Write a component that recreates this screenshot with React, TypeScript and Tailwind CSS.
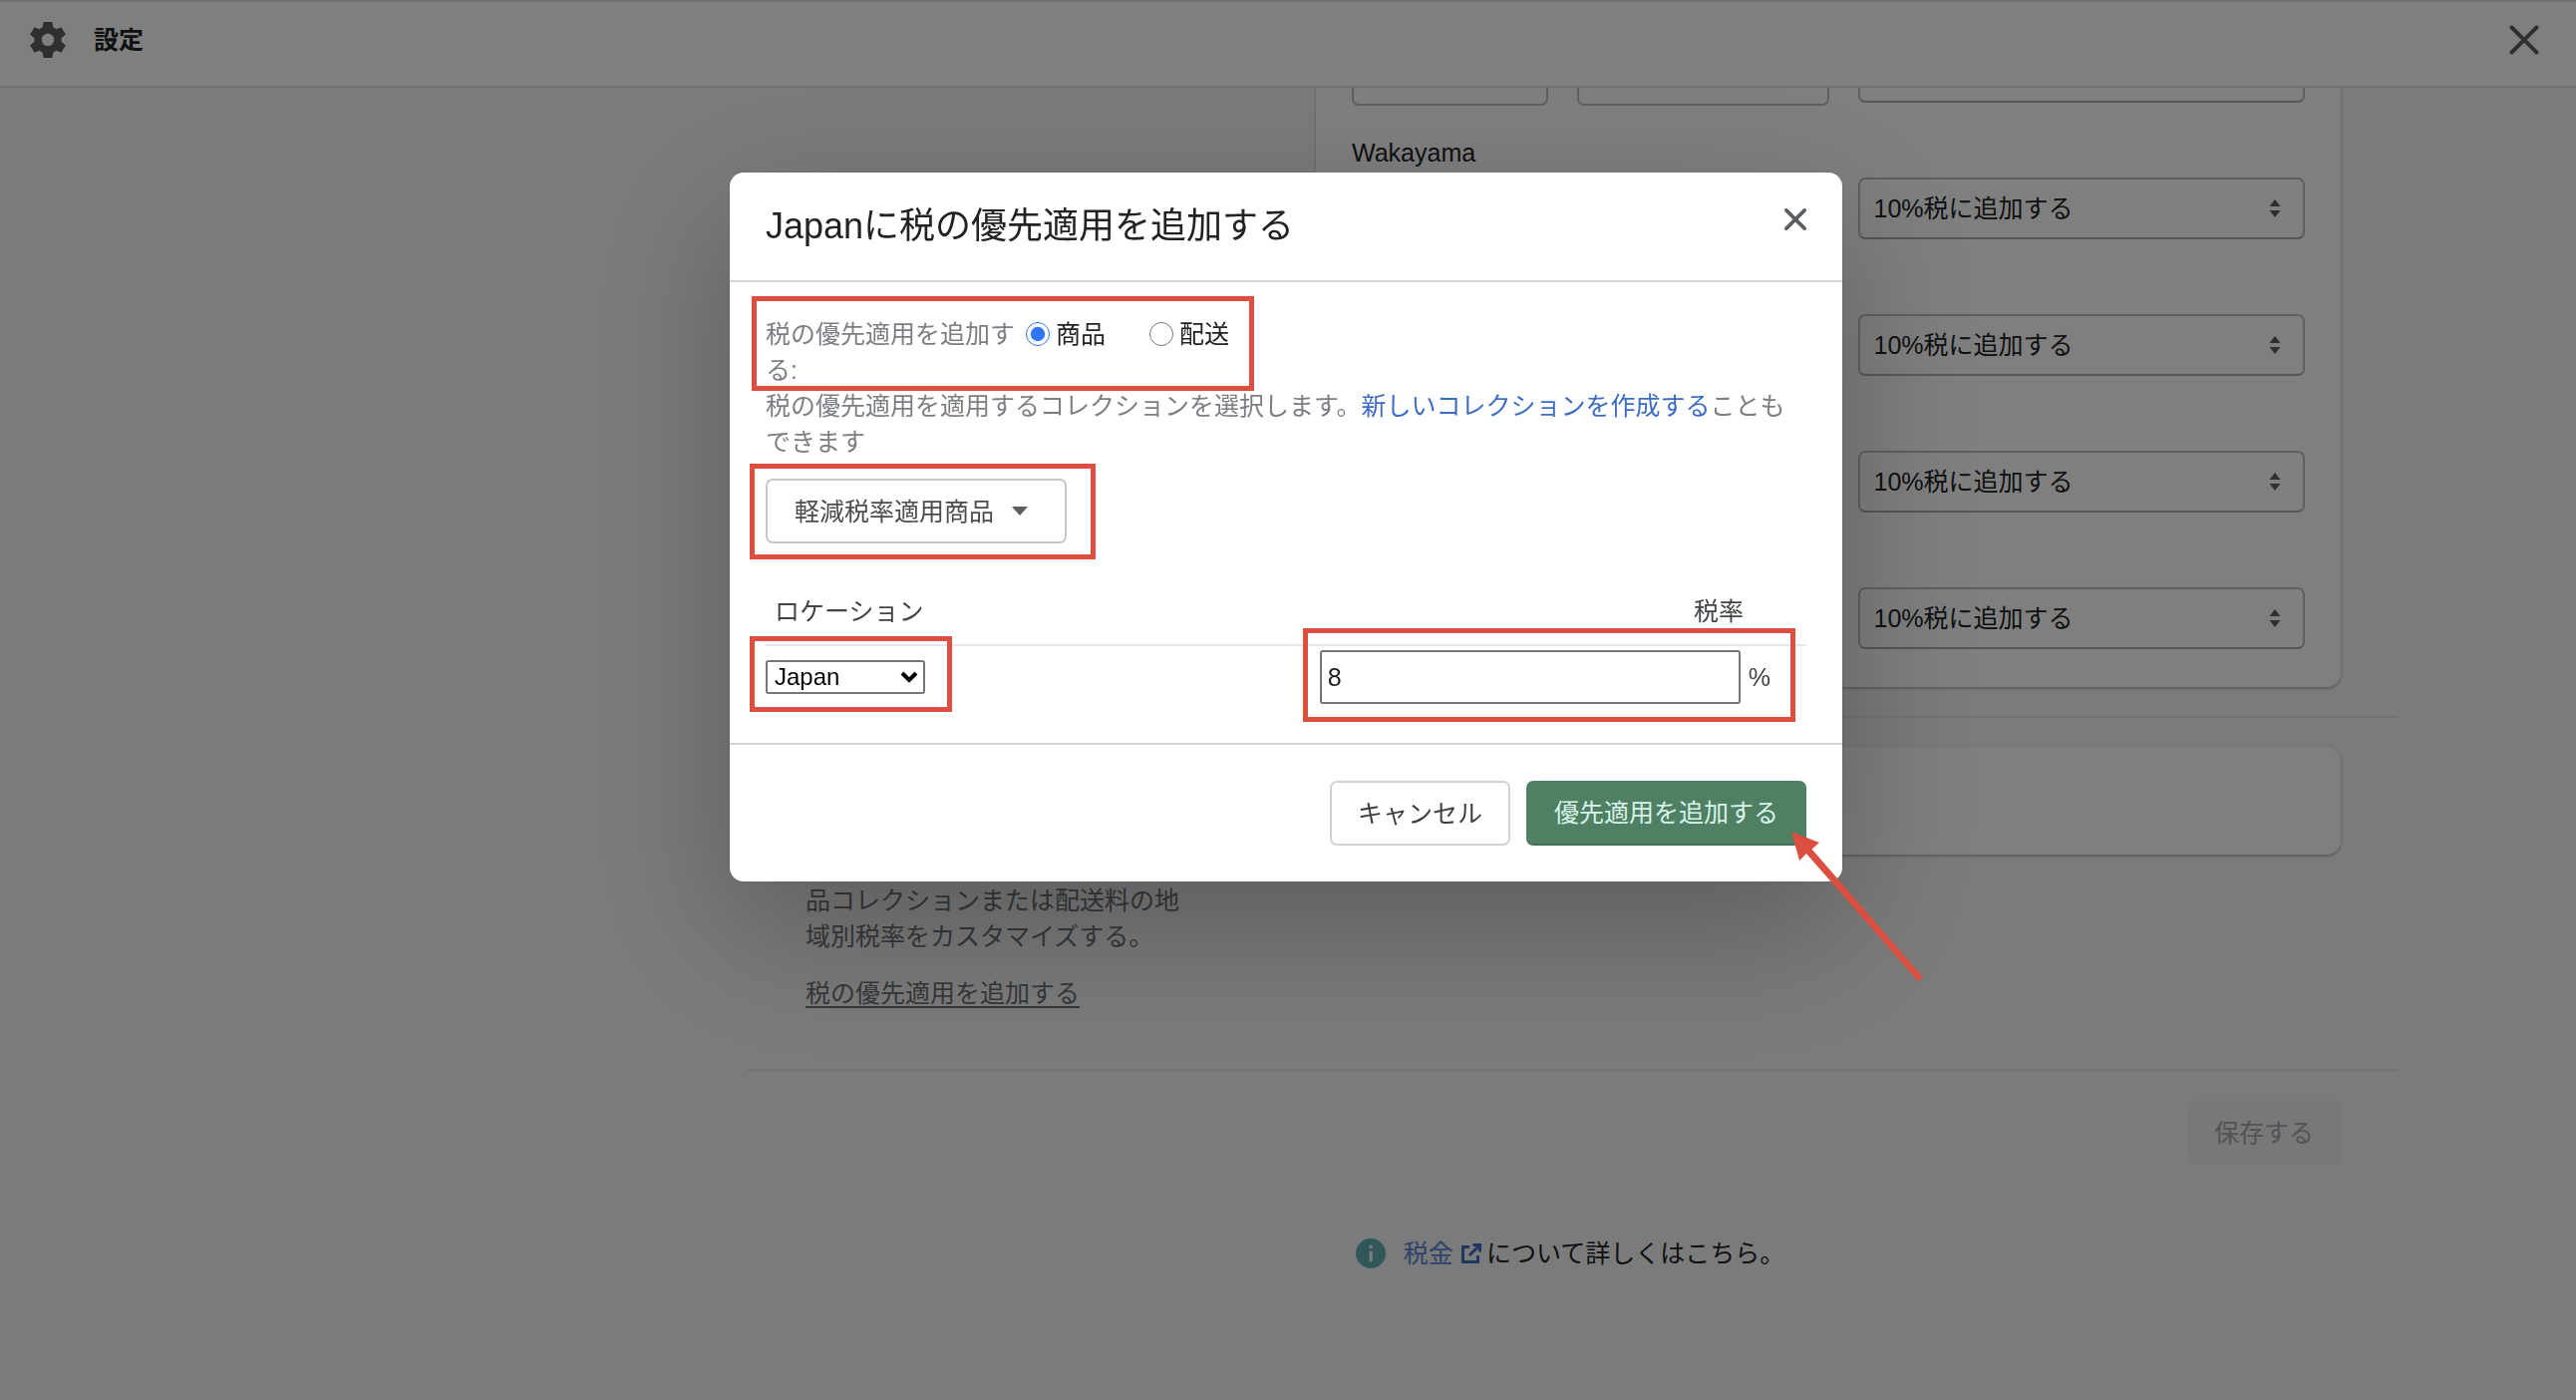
import React, { useState } from 'react';

// Prefecture rows that are scrolled into view behind the modal
const taxRows = [
  { id: 'row-0', name: '' },
  { id: 'row-1', name: 'Wakayama' },
  { id: 'row-2', name: '' },
  { id: 'row-3', name: '' },
  { id: 'row-4', name: '' },
];

const GearIcon = () => (
  <svg viewBox="0 0 36 38" className="h-[38px] w-9" fill="#5c5f62">
    <path
      fillRule="evenodd"
      d="M14.4 1h7.2c.5 0 .9.3 1 .8l.8 4.8c1 .4 2 1 2.9 1.600l4.500-1.700c.5-.2 1 0 1.200.4l3.500 6c.2.400.1 1-.3 1.300L31.400 17.200a13 13 0 0 1 0 3.600l3.800 3c.4.3.5.9.3 1.300l-3.500 6c-.2.400-.7.6-1.200.4l-4.500-1.700c-.9.6-1.900 1.200-2.900 1.600l-.8 4.800c-.1.500-.5.8-1 .8h-7.200c-.5 0-.9-.3-1-.8l-.8-4.800c-1-.4-2-1-2.900-1.600l-4.500 1.700c-.5.2-1 0-1.200-.4l-3.500-6c-.2-.4-.1-1 .3-1.300l3.800-3a13 13 0 0 1 0-3.600l-3.800-3c-.4-.3-.5-.9-.3-1.300l3.500-6c.2-.4.7-.6 1.200-.4l4.500 1.700c.9-.6 1.900-1.200 2.900-1.600l.8-4.800c.1-.5.500-.8 1-.8zM18 25.200a6.200 6.200 0 1 0 0-12.400 6.200 6.200 0 0 0 0 12.400z"
    />
  </svg>
);

const CloseIcon = ({ className, strokeWidth }: { className: string; strokeWidth: number }) => (
  <svg
    viewBox="0 0 30 30"
    className={className}
    fill="none"
    stroke="#5c5f62"
    strokeWidth={strokeWidth}
    strokeLinecap="round"
  >
    <path d="M2.500 2.500l25 25M27.500 2.500l-25 25" />
  </svg>
);

// Red frame drawn around a control to point it out
const Highlight = ({ className }: { className: string }) => (
  <div className={`pointer-events-none absolute border-[5px] border-[#da4f3f] ${className}`} />
);

const TaxSelect = () => (
  <div className="relative mb-[3px] flex-[448]">
    <select
      aria-label="税"
      className="h-[62px] w-full appearance-none rounded-[7px] border-2 border-[#babfc3] border-b-[#a8adb2] bg-white pl-[14px] text-[25px] text-[#202223]"
    >
      <option>10%税に追加する</option>
    </select>
    <svg viewBox="0 0 12 18" className="pointer-events-none absolute top-[22px] right-6 h-[18px] w-3" fill="#5c5f62">
      <path d="M6 0l5.500 7H.5zM6 18l5.500-7H.5z" />
    </svg>
  </div>
);

const App = () => {
  const [target, setTarget] = useState('product');
  const [rate, setRate] = useState('8');

  return (
    <div
      lang="ja"
      className="flex h-screen flex-col overflow-hidden bg-[#f6f6f7] font-['Liberation_Sans','Noto_Sans_CJK_JP',sans-serif] text-[25px] leading-9 text-[#202223]"
    >
      <header className="flex h-[88px] shrink-0 items-center justify-between border-t-2 border-b-2 border-t-[#dcdddf] border-b-[#e1e3e5] bg-white px-[30px] pb-2">
        <div className="flex items-center gap-7">
          <GearIcon />
          <h1 className="text-[25px] font-bold">設定</h1>
        </div>
        <button aria-label="閉じる" className="mr-[7px]">
          <CloseIcon className="h-[30px] w-[30px]" strokeWidth={4} />
        </button>
      </header>

      <main className="flex-1 overflow-hidden pl-[572px]">
        <div className="mx-auto max-w-[1656px]">
          <section className="-mt-[119px] border-b-2 border-[#e6e7e9] px-[58px] pb-[29px]">
            <div className="ml-[512px] rounded-[14px] bg-white px-9 pb-[35px] shadow-[0_0_5px_rgba(23,24,24,0.08),0_2px_3px_rgba(0,0,0,0.2)]">
              {taxRows.map((row) => (
                <div key={row.id} className="flex h-[137px] items-end gap-[29px]">
                  <div className="flex-[478]">
                    {row.name && <p className="mb-[10px]">{row.name}</p>}
                    <div className="flex gap-[29px]">
                      <input aria-label="税率" className="h-[62px] w-0 flex-[196] rounded-[7px] border-2 border-[#babfc3] bg-white" />
                      <input aria-label="税の名前" className="h-[62px] w-0 flex-[253] rounded-[7px] border-2 border-[#babfc3] bg-white" />
                    </div>
                  </div>
                  <TaxSelect />
                </div>
              ))}
            </div>
          </section>

          <section className="flex justify-between border-b-2 border-[#e6e7e9] px-[58px] pt-[29px] pb-[58px]">
            <div className="w-[380px] pt-[136px] text-[#6d7175]">
              <p>品コレクションまたは配送料の地域別税率をカスタマイズする。</p>
              <a href="#override" className="mt-[21px] block underline decoration-2 underline-offset-4">
                税の優先適用を追加する
              </a>
            </div>
            <div className="h-[108px] w-[1028px] rounded-[14px] bg-white shadow-[0_0_5px_rgba(23,24,24,0.08),0_2px_3px_rgba(0,0,0,0.2)]" />
          </section>

          <div className="flex justify-end px-[58px] pt-[29px]">
            <button disabled className="h-[65px] rounded-[7px] bg-[#f0f0f1] px-[27px] text-[#a2a6aa]">
              保存する
            </button>
          </div>

          <p className="mt-[71px] flex items-center justify-center pr-[6px]">
            <svg viewBox="0 0 20 20" className="mr-[18px] h-[30px] w-[30px]">
              <circle cx="10" cy="10" r="10" fill="#62b0b3" />
              <path d="M9 8.500h2.200v7H9zM9 4.500h2.200v2.200H9z" fill="#f6f6f7" />
            </svg>
            <a href="#tax" className="flex items-center text-[#5b87d4]">
              税金
              <svg viewBox="0 0 22 22" className="mr-1 ml-[7px] h-[22px] w-[22px]" fill="none" stroke="#3f6cc0" strokeWidth="3">
                <path d="M9 4.500H2.500v15h15V13M12.500 2.500h7V9.500M19 3L9 13" />
              </svg>
            </a>
            について詳しくはこちら。
          </p>
        </div>
      </main>

      <div className="fixed inset-0 flex items-start justify-center bg-black/50 pt-[173px] pr-1">
        <div
          role="dialog"
          aria-labelledby="modal-title"
          className="relative w-full max-w-[1116px] rounded-[14px] bg-white shadow-[0_47px_144px_rgba(0,0,0,0.25),0_0_2px_rgba(0,0,0,0.2)]"
        >
          <div className="flex h-[110px] items-center justify-between border-b-2 border-[#d5d6d8] px-9">
            <h2 id="modal-title" className="text-[36px]">Japanに税の優先適用を追加する</h2>
            <button aria-label="閉じる" className="mb-[14px]">
              <CloseIcon className="h-[22px] w-[22px]" strokeWidth={5} />
            </button>
          </div>

          <div className="border-b-2 border-[#d2d5d8] px-9 pt-[34px] pb-[39px] text-[#7b7f83]">
            <div className="relative flex w-[470px]">
              <span className="w-[261px]">税の優先適用を追加する:</span>
              <label className="mr-11 flex h-9 items-center gap-[6px] text-[#202223]">
                <input
                  type="radio"
                  name="target"
                  checked={target === 'product'}
                  onChange={() => setTarget('product')}
                  className="h-6 w-6 accent-[#2f76f6]"
                />
                商品
              </label>
              <label className="flex h-9 items-center gap-[6px] text-[#202223]">
                <input
                  type="radio"
                  name="target"
                  checked={target === 'shipping'}
                  onChange={() => setTarget('shipping')}
                  className="h-6 w-6 accent-[#2f76f6]"
                />
                配送
              </label>
              <Highlight className="-top-5 -right-5 -bottom-[3px] -left-[14px]" />
            </div>
            <p>
              税の優先適用を適用するコレクションを選択します。
              <a href="#collection" className="text-[#3d6cc4]">新しいコレクションを作成する</a>
              こともできます
            </p>

            <div className="relative mt-[19px] w-fit">
              <button className="flex h-[65px] items-center gap-[18px] rounded-[7px] border-2 border-[#c4c8cc] px-[27px] pr-[37px] text-[#4a4d50]">
                軽減税率適用商品
                <svg viewBox="0 0 16 9" className="h-[9px] w-4" fill="#5c5f62">
                  <path d="M0 0h16L8 9z" />
                </svg>
              </button>
              <Highlight className="-top-[15px] -right-[29px] -bottom-4 -left-4" />
            </div>

            <table className="mt-[50px] w-full text-[#414548]">
              <thead>
                <tr className="h-[52px] border-b-2 border-[#e6e7e9] align-top">
                  <th className="pl-[9px] text-left font-normal">ロケーション</th>
                  <th className="pr-[63px] text-right font-normal">税率</th>
                </tr>
              </thead>
              <tbody>
                <tr>
                  <td className="pt-1">
                    <div className="relative w-40">
                      <select
                        aria-label="ロケーション"
                        className="block h-[34px] w-full appearance-none rounded-[3px] border-2 border-[#767676] bg-white pl-[7px] text-2xl leading-7 text-black"
                      >
                        <option>Japan</option>
                      </select>
                      <svg
                        viewBox="0 0 18 12"
                        className="pointer-events-none absolute top-[11px] right-[7px] h-3 w-[18px]"
                        fill="none"
                        stroke="#000"
                        strokeWidth="4"
                      >
                        <path d="M2 2l7 7 7-7" />
                      </svg>
                      <Highlight className="-top-6 -right-[27px] -bottom-[18px] -left-4" />
                    </div>
                  </td>
                  <td className="pt-1">
                    <div className="relative mr-9 ml-auto flex w-fit items-center gap-2">
                      <input
                        aria-label="税率"
                        value={rate}
                        onChange={(e) => setRate(e.target.value)}
                        className="h-[54px] w-[422px] rounded-[3px] border-2 border-[#767676] pl-[6px] text-[25px] text-[#202223]"
                      />
                      <span>%</span>
                      <Highlight className="-top-[22px] -right-[25px] -bottom-[18px] -left-[17px]" />
                    </div>
                  </td>
                </tr>
              </tbody>
            </table>
          </div>

          <div className="flex justify-end gap-4 px-9 pt-9 pb-9">
            <button className="h-[65px] rounded-[7px] border-2 border-[#cfd2d6] px-[26px] text-[#3c3f42]">キャンセル</button>
            <button className="relative h-[65px] rounded-[7px] border-b-2 border-[#426f54] bg-[#4f8063] px-7 text-[#d8f3ea]">
              優先適用を追加する
              {/* arrow pointing at the submit button */}
              <svg
                viewBox="0 0 134 153"
                className="pointer-events-none absolute top-[51px] left-[266px] h-[153px] w-[134px]"
                fill="#da4f3f"
              >
                <path d="M0 0l28 11-7.500 6.500L132 146l-5 4L15 22l-7 7z" />
              </svg>
            </button>
          </div>
        </div>
      </div>
    </div>
  );
};

export default App;
